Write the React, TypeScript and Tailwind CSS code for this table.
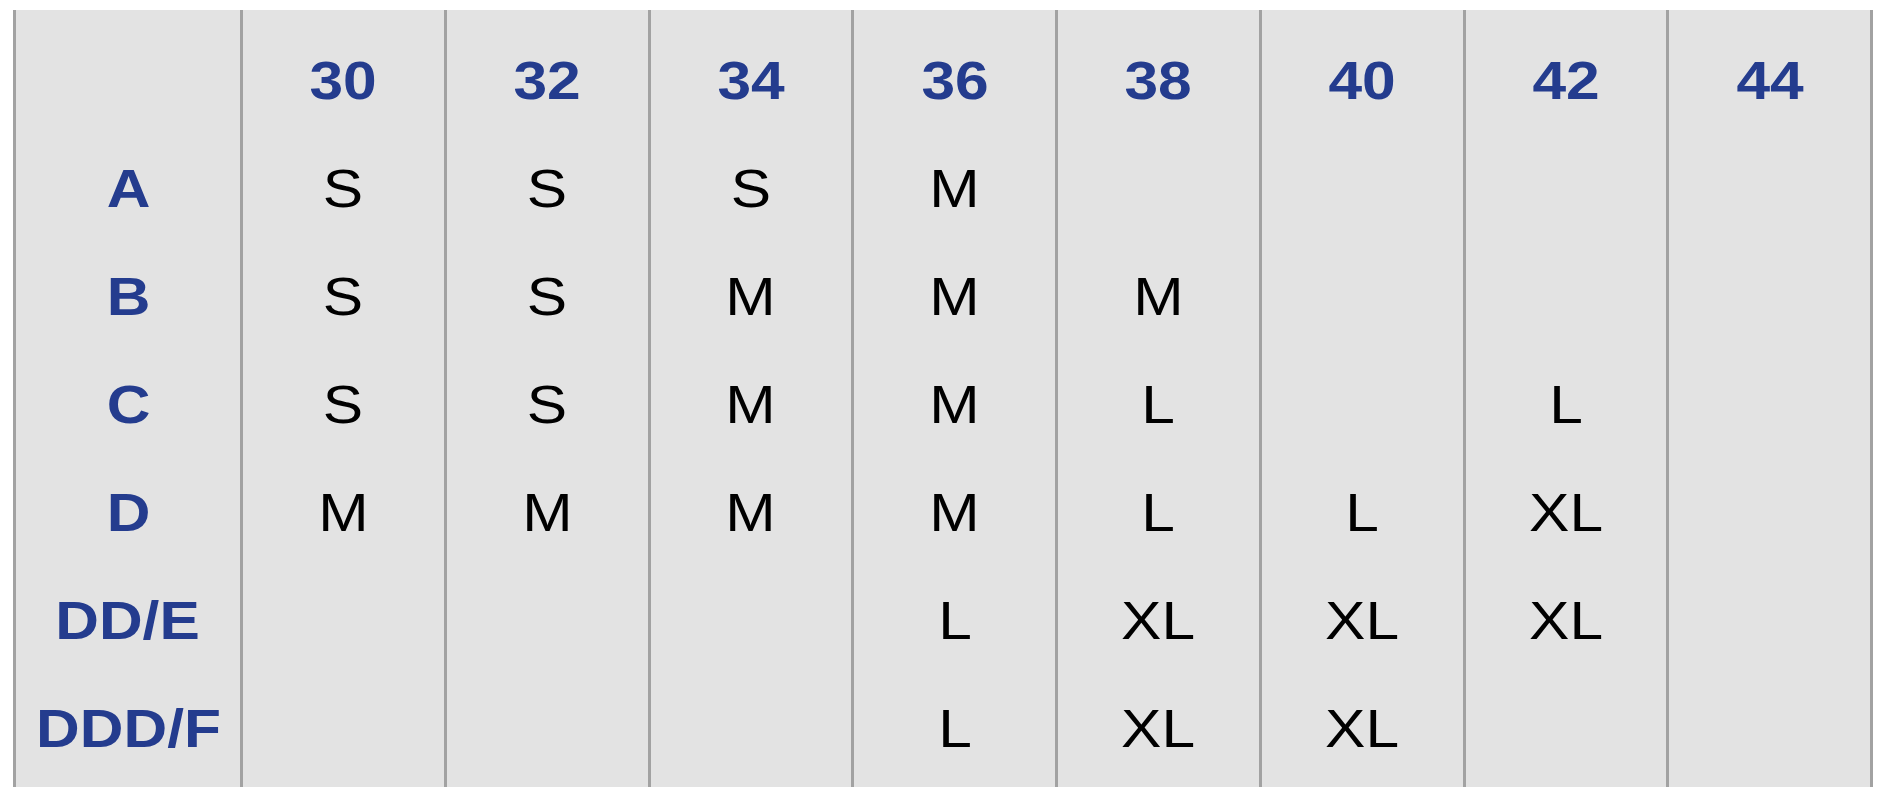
import React from 'react'

const sizes = ['30', '32', '34', '36', '38', '40', '42', '44']
const cups = ['A', 'B', 'C', 'D', 'DD/E', 'DDD/F']

// chart[cupIndex][bandIndex]
const chart: string[][] = [
  ['S', 'S', 'S', 'M', '', '', '', ''],
  ['S', 'S', 'M', 'M', 'M', '', '', ''],
  ['S', 'S', 'M', 'M', 'L', '', 'L', ''],
  ['M', 'M', 'M', 'M', 'L', 'L', 'XL', ''],
  ['', '', '', 'L', 'XL', 'XL', 'XL', ''],
  ['', '', '', 'L', 'XL', 'XL', '', ''],
]

const Cell: React.FC<{ text: string; head?: boolean }> = ({ text, head }) => (
  <div className="h-[108px] flex items-center justify-center">
    {text && (
      <span
        className={`inline-block scale-x-[1.12] text-[54px] leading-none ${
          head ? 'font-bold text-[#243c8e]' : 'font-normal text-black'
        }`}
      >
        {text}
      </span>
    )}
  </div>
)

export default function App() {
  return (
    <div className="w-[1880px] h-[800px] bg-white pt-[10px] pl-[13px] font-['Liberation_Sans',Arial,sans-serif]">
      <div className="w-[1860px] h-[777px] bg-[#e3e3e3] grid grid-cols-[227px_repeat(8,1fr)] border-r-[3px] border-[#a2a2a2]">
        {/* cup labels */}
        <div className="border-l-[3px] border-[#a2a2a2] pt-[16px]">
          <div className="h-[108px]" />
          {cups.map((c) => (
            <Cell key={c} text={c} head />
          ))}
        </div>
        {sizes.map((s, col) => (
          <div key={s} className="border-l-[3px] border-[#a2a2a2] pt-[16px]">
            <Cell text={s} head />
            {chart.map((row, r) => (
              <Cell key={r} text={row[col]} />
            ))}
          </div>
        ))}
      </div>
    </div>
  )
}
